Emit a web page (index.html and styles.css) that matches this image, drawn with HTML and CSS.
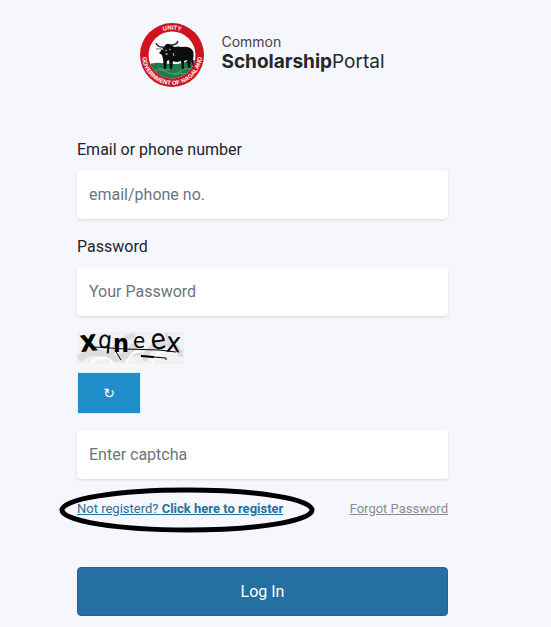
FILE: index.html
```
<!DOCTYPE html>
<html lang="en">
<head>
    <meta charset="utf-8">
    <meta name="viewport" content="width=device-width, initial-scale=1">
    <title>Common Scholarship Portal</title>
    <link rel="stylesheet" href="styles.css">
</head>
<body>
    <main class="login">
        <header class="brand">
            <svg class="seal" viewBox="0 0 64 64" role="img" aria-label="Government of Nagaland">
                <defs>
                    <path id="arcTop" d="M6.500 32a25.500 25.500 0 0 1 51 0"/>
                    <path id="arcBottom" d="M2.300 29a29.850 29.850 0 1 0 59.400 0"/>
                    <clipPath id="inner"><circle cx="32" cy="32" r="23.5"/></clipPath>
                </defs>
                <circle cx="32" cy="32" r="32" fill="#d0141f"/>
                <circle cx="32" cy="32" r="23.5" fill="#fbfcfc"/>
                <g clip-path="url(#inner)">
                    <path d="M6 42q8-3 15-2t14 1 12-3 12 1v24H6z" fill="#217a4c"/>
                    <path d="M12 49q8-4 15 0t14-1 14 1M18 45q7 3 12 1M34 52q6-3 13-1" fill="none" stroke="#5a9c78" stroke-width="1"/>
                </g>
                <!-- bull -->
                <path d="M24 24q2-4 5-3 3 0 5 3 4-1 8 0 8-1 11 4 1 3 0 9l1 6h-1l-2-6-1 8h-2l-1-8-3 1v8h-2l-1-8q-5 2-8 0l-1 8h-2l-1-9-2 1-1 8h-2l-1-10-1-4-3-2z" fill="#0c0e0d"/>
                <path d="M25 24q-7 1-9-4M31 22q6 0 7-4" fill="none" stroke="#333" stroke-width="1.500"/>
                <path d="M16 26q4-1 8 1" fill="none" stroke="#777" stroke-width="1"/>
                <path d="M25 27l2 1M29 26l2 1M25 31h3M33 30l1 3" stroke="#b8bcba" stroke-width="1"/>
                <text class="seal-text"><textPath href="#arcTop" startOffset="50%">UNITY</textPath></text>
                <text class="seal-text"><textPath href="#arcBottom" startOffset="50%">GOVERNMENT OF NAGALAND</textPath></text>
            </svg>
            <div class="brand-name">
                <div class="brand-top">Common</div>
                <div class="brand-title"><strong>Scholarship</strong>Portal</div>
            </div>
        </header>

        <form>
            <div class="field">
                <label for="email">Email or phone number</label>
                <input type="text" id="email" placeholder="email/phone no.">
            </div>
            <div class="field">
                <label for="password">Password</label>
                <input type="password" id="password" placeholder="Your Password">
            </div>

            <div class="captcha">
                <svg class="captcha-image" viewBox="0 0 107 32" role="img" aria-label="Captcha">
                    <rect width="107" height="32" fill="#f1f1f1"/>
                    <g fill="none" stroke="#dcdcdc">
                        <path d="M2 27q14-12 28-3t30-14" stroke-width="7"/>
                        <path d="M32 29q6-21 26-26M68 29q2-16 18-17t18 13" stroke-width="5"/>
                        <path d="M44 30q8-10 22-7M90 1q-2 11 16 19" stroke-width="3"/>
                    </g>
                    <path d="M14 31q12-11 22 0M50 30q4-10 14-12M76 31q2-12 12-12" fill="none" stroke="#fff" stroke-width="2"/>
                    <g class="captcha-text">
                        <text class="heavy" x="3" y="19" transform="rotate(-6 12 12)">x</text>
                        <text x="21" y="16" transform="rotate(6 28 12)">q</text>
                        <text class="bold" x="36" y="20">n</text>
                        <text class="small" x="56" y="16">e</text>
                        <text class="large" x="74" y="17" transform="rotate(-8 81 12)">e</text>
                        <text class="large" x="89" y="20" transform="rotate(4 96 12)">x</text>
                    </g>
                    <path d="M18 15l30 2 34 1 17 2M38 18l6 10M64 24l25 2v2" fill="none" stroke="#000" stroke-width="1"/>
                    <path d="M64 24l13 1" stroke="#000" stroke-width="2"/>
                </svg>
                <button type="button" class="refresh" aria-label="Refresh captcha">↻</button>
            </div>

            <div class="field">
                <input type="text" placeholder="Enter captcha" aria-label="Enter captcha">
            </div>

            <div class="links">
                <div class="register">
                    <a href="#">Not registerd? <strong>Click here to register</strong></a>
                    <svg class="circle-mark" viewBox="0 0 256 46" aria-hidden="true">
                        <ellipse cx="128" cy="23" rx="125" ry="20" fill="none" stroke="#000" stroke-width="5"/>
                    </svg>
                </div>
                <a href="#" class="forgot">Forgot Password</a>
            </div>

            <button type="submit" class="submit">Log In</button>
        </form>
    </main>
</body>
</html>
```
FILE: styles.css
```
* {
    box-sizing: border-box;
}
body {
    margin: 0;
    background-color: #f6f7fc;
    color: #212529;
    font-family: Roboto, "Liberation Sans", sans-serif;
    font-size: 16px;
    line-height: 24px;
}
.login {
    padding: 23px 103px 11px 77px;
}
.brand {
    display: flex;
    align-items: center;
    justify-content: center;
    gap: 17px;
    margin-bottom: 51px;
}
.seal {
    width: 64px;
    height: 64px;
}
.seal-text {
    fill: #fff;
    font-family: "Liberation Sans", Arial, sans-serif;
    font-size: 6px;
    font-weight: bold;
    text-anchor: middle;
}
.brand-name {
    padding-bottom: 4px;
    font-family: Inter, "Open Sans", sans-serif;
    color: #252729;
}
.brand-top {
    font-size: 14px;
    line-height: 17px;
    color: #444;
}
.brand-title {
    font-size: 19px;
    line-height: 23px;
}
.field {
    margin-bottom: 16px;
}
label {
    display: block;
    margin-bottom: 8px;
}
input {
    display: block;
    width: 100%;
    height: 49px;
    padding: 0 12px;
    border: none;
    border-radius: 4px;
    background-color: #fff;
    box-shadow: 0 1px 3px rgba(0, 0, 0, 0.12);
    color: #212529;
    font-family: inherit;
    font-size: 16px;
}
input::placeholder {
    color: #6c757d;
    opacity: 1;
}
.captcha {
    display: flex;
    flex-direction: column;
    align-items: flex-start;
    gap: 8px;
    margin-bottom: 16px;
}
.captcha-image {
    width: 107px;
    height: 32px;
    overflow: visible;
}
.captcha-text {
    font-family: "DejaVu Sans Condensed", "DejaVu Sans", sans-serif;
    font-size: 24px;
}
.captcha-text .heavy {
    font-size: 30px;
    font-weight: bold;
}
.captcha-text .bold {
    font-size: 25px;
    font-weight: bold;
}
.captcha-text .small {
    font-size: 22px;
}
.captcha-text .large {
    font-size: 28px;
}
button {
    color: #fff;
    font-family: inherit;
    font-size: 16px;
    cursor: pointer;
}
.refresh {
    width: 64px;
    height: 42px;
    border: 1px solid #d9effa;
    background-color: #1e8fc8;
    font-family: "DejaVu Sans", sans-serif;
    font-size: 14px;
}
.links {
    display: flex;
    justify-content: space-between;
    margin-top: 20px;
    margin-bottom: 48px;
    font-size: 13px;
    line-height: 20px;
}
.register {
    position: relative;
}
.register a {
    color: #2470a0;
}
.circle-mark {
    position: absolute;
    top: -12px;
    left: -18px;
    width: 256px;
    height: 46px;
    pointer-events: none;
}
.forgot {
    color: #8b8b8b;
}
.submit {
    display: block;
    width: 100%;
    height: 49px;
    border: 1px solid #20658f;
    border-radius: 4px;
    background-color: #2470a3;
}
```
